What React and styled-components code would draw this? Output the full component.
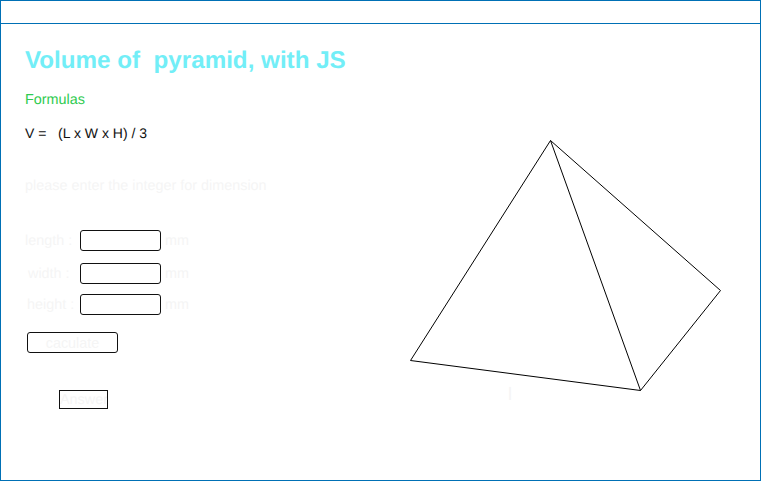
import React from 'react';
import styled, { createGlobalStyle } from 'styled-components';

const Global = createGlobalStyle`
    html, body {
        margin: 0;
        padding: 0;
        background: white;
    }
    * {
        box-sizing: border-box;
    }
`

const FAINT = '#f5f5f5'

const Frame = styled.div`
    width: 761px;
    height: 481px;
    border: 1px solid #0070b5;
    font-family: "Liberation Sans", Arial, sans-serif;
    text-rendering: geometricPrecision;
    background: white;
    display: flex;
    flex-direction: column;
    overflow: hidden;
    `

const TopBar = styled.div`
    height: 23px;
    flex: none;
    border-bottom: 1px solid #0070b5;
    `

const Main = styled.div`
    display: flex;
    flex: 1;
    `

const LeftColumn = styled.div`
    width: 380px;
    padding: 23px 0 0 24px;
    `

const Title = styled.h1`
    margin: 0;
    font-size: 24.2px;
    line-height: 28px;
    font-weight: bold;
    color: #72eef7;
    white-space: pre;
    `

const Subtitle = styled.div`
    margin-top: 17px;
    font-size: 14.4px;
    line-height: 16px;
    color: #2fcb50;
    `

const Formula = styled.div`
    margin-top: 17px;
    font-size: 14px;
    line-height: 16px;
    color: #111;
    white-space: pre;
    `

const Hint = styled.div`
    margin-top: 37px;
    font-size: 14.4px;
    line-height: 16px;
    color: ${FAINT};
    `

const Fields = styled.div`
    margin-top: 35px;
    display: flex;
    flex-direction: column;
    `

const Row = styled.div`
    height: 22px;
    margin-bottom: ${({ $gap }) => $gap}px;
    display: flex;
    align-items: center;
    `

const Label = styled.label`
    width: 55px;
    padding: 2px 0 0 ${({ $indent }) => $indent}px;
    font-size: 14.4px;
    color: ${FAINT};
    white-space: pre;
    `

const Field = styled.input`
    width: 81px;
    height: 21px;
    border: 1px solid #111;
    border-radius: 3px;
    background: white;
    padding: 0;
    `

const Unit = styled.span`
    margin-left: 4px;
    padding-top: 2px;
    font-size: 14.4px;
    color: ${FAINT};
    `

const Calculate = styled.button`
    display: block;
    margin: 17px 0 0 2px;
    width: 91px;
    height: 21px;
    padding: 0;
    border: 1px solid #111;
    border-radius: 3px;
    background: white;
    font-family: inherit;
    font-size: 14.4px;
    color: ${FAINT};
    `

const Answer = styled.div`
    margin: 37px 0 0 34px;
    width: 49px;
    height: 19px;
    border: 1px solid #111;
    font-size: 14.4px;
    line-height: 19px;
    text-align: left;
    color: ${FAINT};
    overflow: hidden;
    `

const Drawing = styled.div`
    flex: 1;
    `

const Pyramid = styled.svg`
    display: block;
    fill: none;
    stroke: #000;
    stroke-width: 1;
    `

const SideLabel = styled.text`
    fill: ${FAINT};
    stroke: none;
    font-family: "Liberation Sans", sans-serif;
    font-size: 18px;
    `

const rows = [
    { label: 'length :', indent: 0, gap: 11 },
    { label: 'width :', indent: 3, gap: 9 },
    { label: 'height :', indent: 2, gap: 0 },
]

export default function App() {
    return (
        <Frame>
            <Global />
            <TopBar />
            <Main>
                <LeftColumn>
                    <Title>Volume of  pyramid, with JS</Title>
                    <Subtitle>Formulas</Subtitle>
                    <Formula>V =   (L x W x H) / 3</Formula>
                    <Hint>please enter the integer for dimension</Hint>
                    <Fields>
                        {rows.map(row => (
                            <Row key={row.label} $gap={row.gap}>
                                <Label $indent={row.indent}>{row.label}</Label>
                                <Field type="text" />
                                <Unit>mm</Unit>
                            </Row>
                        ))}
                    </Fields>
                    <Calculate>caculate</Calculate>
                    <Answer>Answer</Answer>
                </LeftColumn>
                <Drawing>
                    <Pyramid width="379" height="456" viewBox="381 24 379 456">
                        <path d="M550.5 140.5 L410.5 360.5 L640.5 390.5 L720.5 290.5 Z" />
                        <path d="M550.5 140.5 L640.5 390.5" />
                        <SideLabel x="508" y="400">l</SideLabel>
                    </Pyramid>
                </Drawing>
            </Main>
        </Frame>
    )
}
